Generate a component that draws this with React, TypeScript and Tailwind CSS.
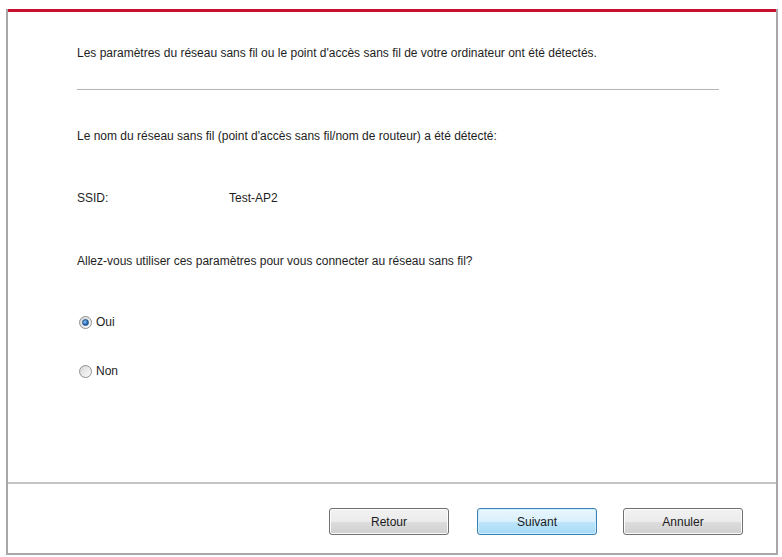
import { useState } from "react";

function Radio({ checked, label, onClick }: { checked: boolean; label: string; onClick: () => void }) {
  return (
    <button type="button" onClick={onClick} className="flex items-center gap-[4px] cursor-default">
      <span className="w-[13px] h-[13px] rounded-full border border-[#8e8f8f] bg-[linear-gradient(135deg,#d6d6d6,#fdfdfd)] flex items-center justify-center">
        {checked && (
          <span className="w-[7px] h-[7px] rounded-full bg-[radial-gradient(circle_at_35%_35%,#8cc4f0,#1f5fa8_70%)] border border-[#1b4f8d]" />
        )}
      </span>
      <span>{label}</span>
    </button>
  );
}

function WinButton({ label, primary = false }: { label: string; primary?: boolean }) {
  return (
    <button
      type="button"
      className={
        primary
          ? "w-[120px] h-[27px] rounded-[3px] border border-[#3c7fb1] bg-[linear-gradient(#eaf6fd_0%,#d9f0fc_50%,#bee6fd_51%,#a7d9f5_100%)] shadow-[inset_0_0_0_1px_#cdeeff] text-[#1a1a1a]"
          : "w-[120px] h-[27px] rounded-[3px] border border-[#707070] bg-[linear-gradient(#f2f2f2_0%,#ebebeb_50%,#dddddd_51%,#cfcfcf_100%)] shadow-[inset_0_0_0_1px_#fcfcfc] text-[#1a1a1a]"
      }
    >
      {label}
    </button>
  );
}

export default function App() {
  const [useDetected, setUseDetected] = useState(true);

  return (
    <div className="w-[782px] h-[557px] bg-white pt-[9px] pl-[6px] pr-[4px] pb-[2px] text-[12px] text-[#1e1e1e] font-['Liberation_Sans',Arial,sans-serif]">
      <div className="h-full flex flex-col border-x-2 border-b-2 border-[#a8a8a8]">
        <div className="h-[3px] bg-[#c8102e] shrink-0" />
        <div className="flex-1 flex flex-col pl-[69px] pr-[57px]">
          <p className="mt-[34px] leading-[15px]">
            Les paramètres du réseau sans fil ou le point d'accès sans fil de votre ordinateur ont été détectés.
          </p>
          <div className="mt-[28px] h-px bg-[#b4b4b4]" />
          <p className="mt-[39px] leading-[15px]">
            Le nom du réseau sans fil (point d'accès sans fil/nom de routeur) a été détecté:
          </p>
          <div className="mt-[47px] flex leading-[15px]">
            <span className="w-[152px]">SSID:</span>
            <span>Test-AP2</span>
          </div>
          <p className="mt-[48px] leading-[15px]">
            Allez-vous utiliser ces paramètres pour vous connecter au réseau sans fil?
          </p>
          <div className="mt-[46px] pl-[2px] leading-[15px]">
            <Radio checked={useDetected} label="Oui" onClick={() => setUseDetected(true)} />
          </div>
          <div className="mt-[34px] pl-[2px] leading-[15px]">
            <Radio checked={!useDetected} label="Non" onClick={() => setUseDetected(false)} />
          </div>
        </div>
        <div className="h-[71px] shrink-0 border-t-2 border-[#c4c4c4] flex items-start pt-[24px] pl-[321px]">
          <WinButton label="Retour" />
          <div className="w-[28px]" />
          <WinButton label="Suivant" primary />
          <div className="w-[26px]" />
          <WinButton label="Annuler" />
        </div>
      </div>
    </div>
  );
}
